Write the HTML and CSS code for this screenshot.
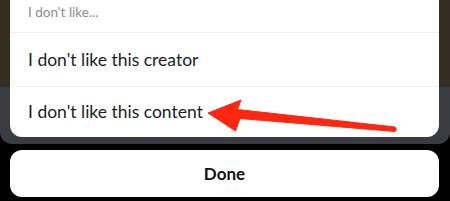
FILE: index.html
```html
<!DOCTYPE html>
<html>
<head>
<meta charset="utf-8">
<link rel="stylesheet" href="styles.css">
</head>
<body>
<div class="sheet">
  <div class="panel">
    <div class="row header">I don't like...</div>
    <div class="row option">I don't like this creator</div>
    <div class="row option last">I don't like this content</div>
  </div>
</div>
<div class="done">Done</div>
<svg class="arrow" width="450" height="201" viewBox="0 0 450 201">
  <polygon points="208,113 241,100 237.5,109.5 395,127 396.5,129.5 395,131.5 240,118.5 235.5,131" fill="#fa2712" stroke="#fa2712" stroke-width="1" stroke-linejoin="round"/>
</svg>
</body>
</html>
```
FILE: styles.css
```css
html, body {
  margin: 0;
  padding: 0;
}
body {
  width: 450px;
  height: 201px;
  background: #000;
  overflow: hidden;
  position: relative;
  font-family: Lato, "Noto Sans", sans-serif;
}
.sheet {
  height: 144px;
  box-sizing: border-box;
  padding: 0 11px 0 10px;
  background: linear-gradient(#342e22 0, #342e22 87px, #3b3c41 87px, #3b3c41 100%);
  border-radius: 0 0 12px 12px;
}
.panel {
  background: #fff;
  height: 137px;
  border-radius: 0 0 12px 12px;
  display: flex;
  flex-direction: column;
}
.row {
  padding-left: 18px;
  display: flex;
  align-items: center;
  box-sizing: border-box;
  border-bottom: 1px solid #f1f1f2;
}
.header {
  height: 33px;
  padding-bottom: 8px;
  font-size: 13.5px;
  color: #8b8e94;
}
.option {
  height: 54px;
  font-size: 17.5px;
  color: #1d1d1f;
}
.option.last {
  height: 50px;
  border-bottom: none;
  padding-bottom: 2px;
}
.done {
  margin: 6px 11px 0 10px;
  height: 47px;
  background: #fff;
  border-radius: 12px;
  display: flex;
  align-items: center;
  justify-content: center;
  font-weight: 700;
  font-size: 17px;
  color: #111;
}
.arrow {
  position: absolute;
  left: 0;
  top: 0;
}
```
